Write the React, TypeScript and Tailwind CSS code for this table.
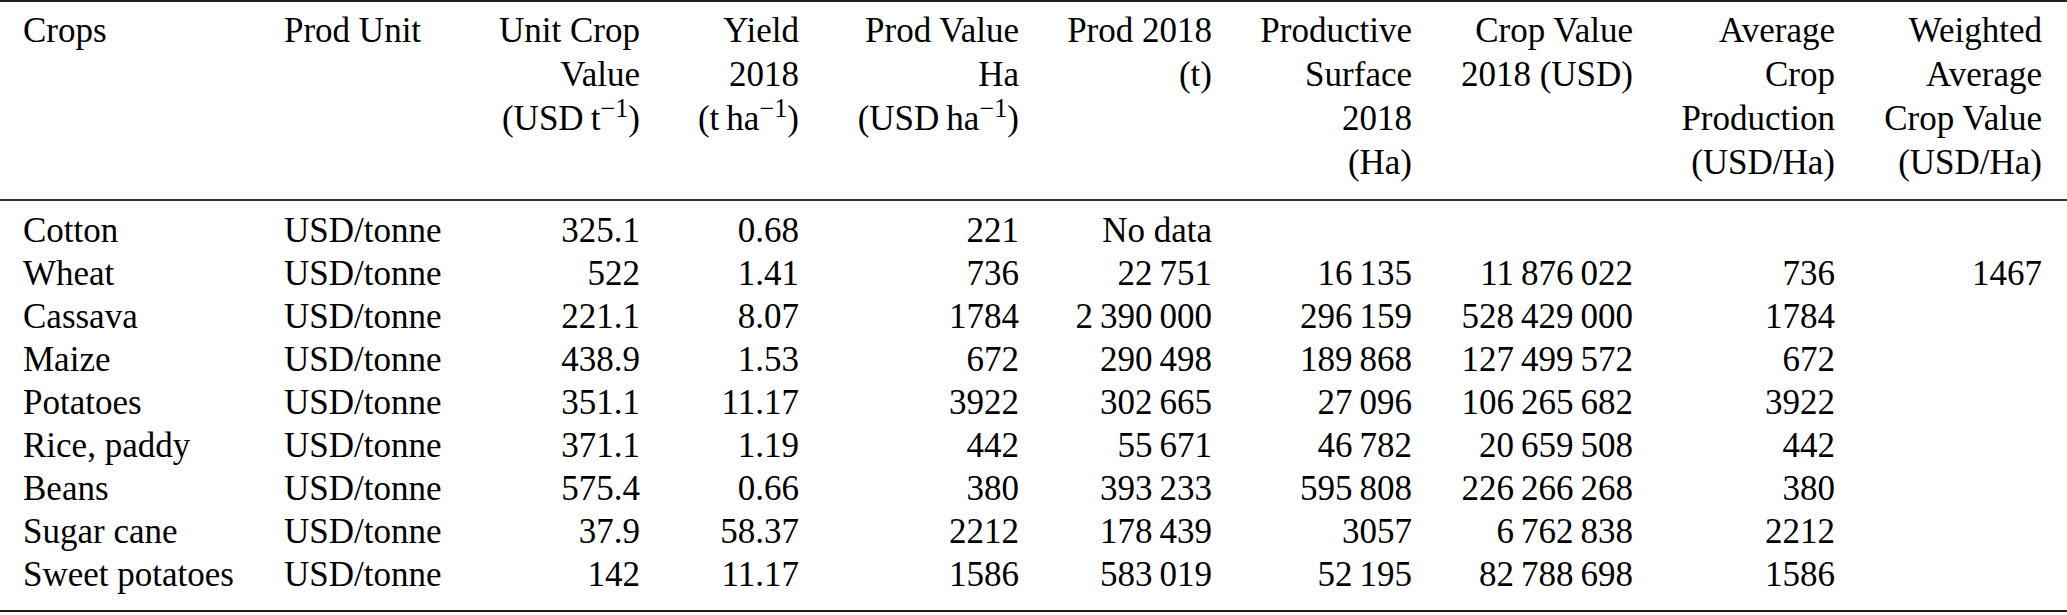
import React from "react";

const cols =
  "grid grid-cols-[261px_176px_180px_159px_220px_193px_200px_221px_202px_207px]";

// thin space, like LaTeX's \, between digit groups
const T = "\u2009";

const rows: string[][] = [
  ["Cotton", "USD/tonne", "325.1", "0.68", "221", "No data", "", "", "", ""],
  ["Wheat", "USD/tonne", "522", "1.41", "736", `22${T}751`, `16${T}135`, `11${T}876${T}022`, "736", "1467"],
  ["Cassava", "USD/tonne", "221.1", "8.07", "1784", `2${T}390${T}000`, `296${T}159`, `528${T}429${T}000`, "1784", ""],
  ["Maize", "USD/tonne", "438.9", "1.53", "672", `290${T}498`, `189${T}868`, `127${T}499${T}572`, "672", ""],
  ["Potatoes", "USD/tonne", "351.1", "11.17", "3922", `302${T}665`, `27${T}096`, `106${T}265${T}682`, "3922", ""],
  ["Rice, paddy", "USD/tonne", "371.1", "1.19", "442", `55${T}671`, `46${T}782`, `20${T}659${T}508`, "442", ""],
  ["Beans", "USD/tonne", "575.4", "0.66", "380", `393${T}233`, `595${T}808`, `226${T}266${T}268`, "380", ""],
  ["Sugar cane", "USD/tonne", "37.9", "58.37", "2212", `178${T}439`, "3057", `6${T}762${T}838`, "2212", ""],
  ["Sweet potatoes", "USD/tonne", "142", "11.17", "1586", `583${T}019`, `52${T}195`, `82${T}788${T}698`, "1586", ""],
];

const Inv = () => <sup>−1</sup>;

const headers: React.ReactNode[][] = [
  ["Crops"],
  ["Prod Unit"],
  ["Unit Crop", "Value", <>(USD{T}t<Inv />)</>],
  ["Yield", "2018", <>(t{T}ha<Inv />)</>],
  ["Prod Value", "Ha", <>(USD{T}ha<Inv />)</>],
  ["Prod 2018", "(t)"],
  ["Productive", "Surface", "2018", "(Ha)"],
  ["Crop Value", "2018 (USD)"],
  ["Average", "Crop", "Production", "(USD/Ha)"],
  ["Weighted", "Average", "Crop Value", "(USD/Ha)"],
];

export default function App() {
  return (
    <div className="w-[2067px] h-[615px] bg-white text-black font-['Liberation_Serif','Times_New_Roman',serif] text-[35px]">
      <div className="border-t-2 border-[#222]" />
      <div className={`${cols} pl-[23px] pt-[7px] pb-[14px] leading-[44px]`}>
        {headers.map((lines, i) => (
          <div key={i} className={i < 2 ? "text-left" : "text-right"}>
            {lines.map((l, j) => (
              <div key={j} className="whitespace-nowrap">
                {l}
              </div>
            ))}
          </div>
        ))}
      </div>
      <div className="border-t-2 border-[#333]" />
      <div className={`${cols} pl-[23px] pt-[8px] pb-[14px] leading-[43px]`}>
        {rows.map((r, i) =>
          r.map((c, j) => (
            <div
              key={`${i}-${j}`}
              className={`whitespace-nowrap ${j < 2 ? "text-left" : "text-right"}`}
            >
              {c}
            </div>
          ))
        )}
      </div>
      <div className="border-t-2 border-[#222]" />
    </div>
  );
}
